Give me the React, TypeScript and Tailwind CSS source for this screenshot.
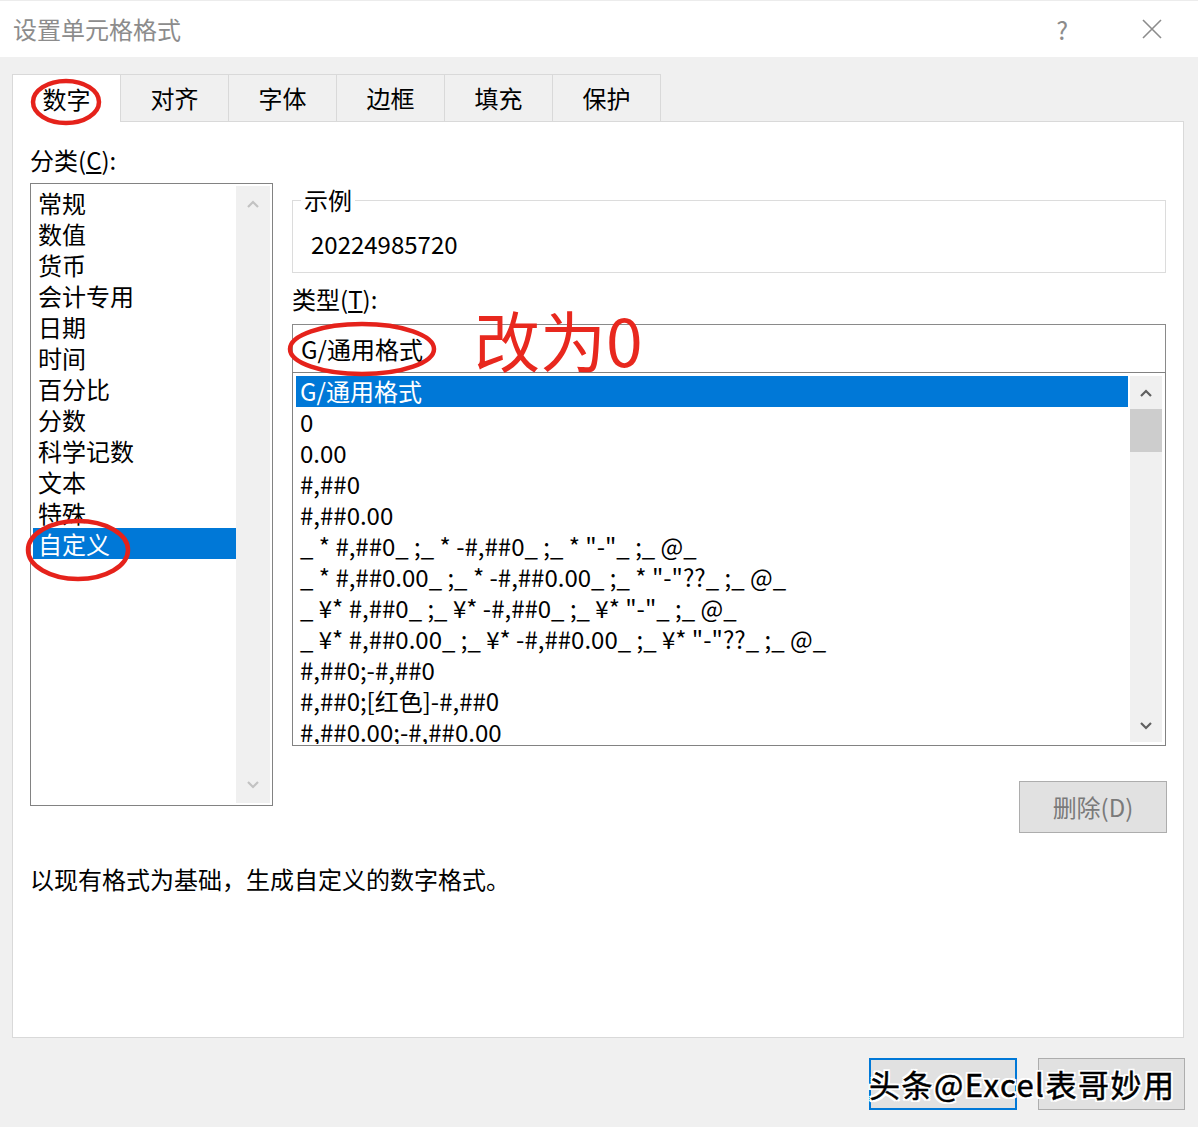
import React from 'react';

const categories = ['常规', '数值', '货币', '会计专用', '日期', '时间', '百分比', '分数', '科学记数', '文本', '特殊', '自定义'];

const formats = [
  'G/通用格式',
  '0',
  '0.00',
  '#,##0',
  '#,##0.00',
  '_ * #,##0_ ;_ * -#,##0_ ;_ * "-"_ ;_ @_',
  '_ * #,##0.00_ ;_ * -#,##0.00_ ;_ * "-"??_ ;_ @_',
  '_ ¥* #,##0_ ;_ ¥* -#,##0_ ;_ ¥* "-"_ ;_ @_',
  '_ ¥* #,##0.00_ ;_ ¥* -#,##0.00_ ;_ ¥* "-"??_ ;_ @_',
  '#,##0;-#,##0',
  '#,##0;[红色]-#,##0',
  '#,##0.00;-#,##0.00',
];

const tabs = ['数字', '对齐', '字体', '边框', '填充', '保护'];

function Chevron({ up, className }: { up?: boolean; className?: string }) {
  return (
    <svg width="14" height="10" viewBox="0 0 14 10" className={className}>
      <path d={up ? 'M2 8 L7 3 L12 8' : 'M2 2 L7 7 L12 2'} fill="none" stroke="currentColor" strokeWidth="2.2" />
    </svg>
  );
}

export default function App() {
  return (
    <div className="relative w-[1198px] h-[1127px] bg-[#f0f0f0] flex flex-col font-['Microsoft_YaHei','Noto_Sans_CJK_SC',sans-serif] text-[24px] text-black overflow-hidden">
      {/* 标题栏 */}
      <div className="h-[57px] bg-white border-t border-[#ececec] flex items-center pl-[13px] pr-[36px]">
        <div className="text-[#8c8c8c] leading-none flex-1">设置单元格格式</div>
        <div className="text-[#8c8c8c] text-[25px] leading-none mr-[74px]">?</div>
        <svg width="20" height="20" viewBox="0 0 20 20">
          <path d="M1 1 L19 19 M19 1 L1 19" stroke="#8c8c8c" strokeWidth="1.6" />
        </svg>
      </div>

      {/* 选项卡 */}
      <div className="flex items-end pl-[12px] pt-[17px]">
        {tabs.map((t, i) =>
          i === 0 ? (
            <div
              key={t}
              className="relative z-10 w-[109px] h-[48px] -mb-px bg-white border-x border-t border-[#d9d9d9] flex items-center justify-center"
            >
              {t}
            </div>
          ) : (
            <div
              key={t}
              className="w-[108px] h-[47px] border-r border-t border-[#d9d9d9] bg-[#f0f0f0] flex items-center justify-center"
            >
              {t}
            </div>
          )
        )}
      </div>

      {/* 面板 */}
      <div className="mx-[12px] mr-[14px] h-[917px] bg-white border border-[#d9d9d9] px-[17px] pt-[22px] flex flex-col">
        <div className="flex gap-[19px]">
          {/* 分类 */}
          <div className="w-[243px] flex flex-col">
            <div className="leading-[32px]">
              分类(<span className="underline">C</span>):
            </div>
            <div className="mt-[7px] h-[623px] border border-[#828282] flex p-[2px]">
              <div className="flex-1 pt-[1px]">
                {categories.map((c, i) => (
                  <div
                    key={c}
                    className={`h-[31px] leading-[31px] px-[5px] ${i === 11 ? 'bg-[#0078d7] text-white' : ''}`}
                  >
                    {c}
                  </div>
                ))}
              </div>
              <div className="w-[34px] bg-[#f0f0f0] flex flex-col items-center justify-between py-[13px] text-[#c2c2c2]">
                <Chevron up />
                <Chevron />
              </div>
            </div>
          </div>

          {/* 右侧 */}
          <div className="flex-1 flex flex-col">
            <fieldset className="mt-[41px] h-[88px] border border-[#dcdcdc] px-[18px]">
              <legend className="ml-[-10px] px-[3px] leading-[30px]">示例</legend>
              <div className="leading-[32px] mt-[13px]">20224985720</div>
            </fieldset>
            <div className="mt-[10px] leading-[32px]">
              类型(<span className="underline">T</span>):
            </div>
            <div className="mt-[9px] h-[48px] border border-[#8a8a8a] border-b-0 flex items-center px-[8px]">
              G/通用格式
            </div>
            <div className="h-[374px] border border-[#828282] flex px-[3px] pt-[3px] pb-[1px] overflow-hidden">
              <div className="flex-1 overflow-hidden">
                {formats.map((f, i) => (
                  <div
                    key={f}
                    className={`h-[31px] leading-[30px] px-[4px] whitespace-pre ${i === 0 ? 'bg-[#0078d7] text-white' : ''}`}
                  >
                    {f}
                  </div>
                ))}
              </div>
              <div className="ml-[2px] mb-[2px] w-[32px] bg-[#f0f0f0] flex flex-col items-center text-[#606060]">
                <div className="h-[33px] flex items-center justify-center">
                  <Chevron up />
                </div>
                <div className="w-full h-[43px] bg-[#cdcdcd]" />
                <div className="flex-1" />
                <div className="h-[33px] flex items-center justify-center">
                  <Chevron />
                </div>
              </div>
            </div>
            <div className="flex justify-end mt-[35px] -mr-px">
              <div className="w-[148px] h-[52px] bg-[#e1e1e1] border border-[#adadad] text-[#7a7a7a] flex items-center justify-center">
                删除(D)
              </div>
            </div>
          </div>
        </div>
        <div className="mt-[30px] leading-[32px]">以现有格式为基础，生成自定义的数字格式。</div>
      </div>

      {/* 底部按钮 */}
      <div className="flex justify-end gap-[21px] pt-[20px] pr-[13px]">
        <div className="w-[148px] h-[52px] bg-[#e1e1e1] border-2 border-[#0078d7]" />
        <div className="w-[147px] h-[52px] bg-[#e1e1e1] border border-[#adadad]" />
      </div>

      {/* 标注 */}
      <svg className="absolute z-20 left-0 top-0 pointer-events-none" width="1198" height="1127">
        <ellipse cx="66" cy="102" rx="33" ry="21" fill="none" stroke="#e5221b" strokeWidth="4.5" />
        <ellipse cx="362" cy="349" rx="72" ry="25" fill="none" stroke="#e5221b" strokeWidth="4.5" />
        <ellipse cx="78" cy="550" rx="50" ry="29" fill="none" stroke="#e5221b" strokeWidth="4.5" />
      </svg>
      <div className="absolute z-20 left-[474px] top-[298px] text-[66px] leading-[80px] text-[#e8281e]">改为0</div>
      <div className="absolute z-20 left-[869px] top-[1065px] text-[31px] leading-[38px] tracking-[1.5px] text-black [-webkit-text-stroke:0.5px_black] [text-shadow:-2px_0_#fff,2px_0_#fff,0_-2px_#fff,0_2px_#fff,-2px_-2px_#fff,2px_2px_#fff,-2px_2px_#fff,2px_-2px_#fff]">
        头条@Excel表哥妙用
      </div>
    </div>
  );
}
